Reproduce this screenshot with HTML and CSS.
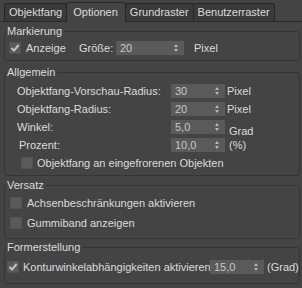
FILE: index.html
```html
<!DOCTYPE html>
<html lang="de">
	<head>
		<meta charset="UTF-8">
		<title>Optionen</title>
		<link rel="stylesheet" href="styles.css">
	</head>
	<body>
		<div class="tabs">
			<div class="tab">Objektfang</div>
			<div class="tab active">Optionen</div>
			<div class="tab">Grundraster</div>
			<div class="tab">Benutzerraster</div>
		</div>

		<fieldset class="group g1">
			<legend>Markierung</legend>
			<div class="row r-mark">
				<span class="check on"><svg viewBox="0 0 12 12"><polyline points="2.5,6 5,8.6 9.6,3"/></svg></span>
				<span class="txt anz">Anzeige</span>
				<span class="txt size">Größe:</span>
				<span class="spin w68">20<i class="arr"></i></span>
				<span class="unit u10">Pixel</span>
			</div>
		</fieldset>

		<fieldset class="group g2">
			<legend>Allgemein</legend>
			<div class="row r-field">
				<span class="txt name">Objektfang-Vorschau-Radius:</span>
				<span class="spin">30<i class="arr"></i></span>
				<span class="unit">Pixel</span>
			</div>
			<div class="row r-field">
				<span class="txt name">Objektfang-Radius:</span>
				<span class="spin">20<i class="arr"></i></span>
				<span class="unit">Pixel</span>
			</div>
			<div class="row r-field">
				<span class="txt name">Winkel:</span>
				<span class="spin">5,0<i class="arr"></i></span>
				<span class="unit low">Grad</span>
			</div>
			<div class="row r-field r-pct">
				<span class="txt name">Prozent:</span>
				<span class="spin">10,0<i class="arr"></i></span>
				<span class="unit u4">(%)</span>
			</div>
			<div class="row r-frozen">
				<span class="check"></span>
				<span class="txt">Objektfang an eingefrorenen Objekten</span>
			</div>
		</fieldset>

		<fieldset class="group g3">
			<legend>Versatz</legend>
			<div class="row r-off">
				<span class="check"></span>
				<span class="txt">Achsenbeschränkungen aktivieren</span>
			</div>
			<div class="row r-off">
				<span class="check"></span>
				<span class="txt">Gummiband anzeigen</span>
			</div>
		</fieldset>

		<fieldset class="group g4">
			<legend>Formerstellung</legend>
			<div class="row">
				<span class="check on"><svg viewBox="0 0 12 12"><polyline points="2.5,6 5,8.6 9.6,3"/></svg></span>
				<span class="txt contour">Konturwinkelabhängigkeiten aktivieren</span>
				<span class="spin">15,0<i class="arr"></i></span>
				<span class="unit u3">(Grad)</span>
			</div>
		</fieldset>
	</body>
</html>
```

FILE: styles.css
```css
* {
	margin: 0;
	padding: 0;
	box-sizing: border-box;
}

body {
	width: 302px;
	height: 288px;
	overflow: hidden;
	background-color: #444;
	color: #dcdcdc;
	font-family: "Liberation Sans", Arial, sans-serif;
	font-size: 11px;
}

/* Reiter */
.tabs {
	display: flex;
	align-items: flex-end;
	height: 22px;
	padding-left: 4px;
	border-bottom: 1px solid #2a2a2a;
}

.tab {
	height: 18px;
	margin-right: -1px;
	padding: 0 4px;
	border: 1px solid #262626;
	border-bottom: none;
	border-radius: 3px 3px 0 0;
	background-color: #3a3a3a;
	line-height: 16px;
	white-space: nowrap;
}

.tab.active {
	position: relative;
	height: 20px;
	margin-bottom: -1px;
	padding: 0 7px 0 6px;
	background-color: #444;
	line-height: 18px;
}

/* Gruppen */
.group {
	min-width: 0;
	margin: 0 2px 0 4px;
	padding: 0 4px 0 2px;
	border: 1px solid #353535;
	border-radius: 3px;
}

.group legend {
	margin-left: -1px;
	padding: 0 2px 0 1px;
	line-height: 14px;
}

.g1 {
	margin-top: 2px;
	padding-top: 3px;
	padding-bottom: 5px;
}

.g2 {
	margin-top: 4px;
	padding-top: 5px;
	padding-bottom: 5px;
}

.g3 {
	margin-top: 2px;
	padding-top: 4px;
	padding-bottom: 8px;
}

.g4 {
	margin-top: 1px;
	padding-top: 6px;
	padding-right: 0;
	padding-bottom: 9px;
}

.row {
	display: flex;
	align-items: center;
	height: 14px;
	white-space: nowrap;
}

.r-mark {
	padding-left: 2px;
}

.r-field {
	padding-left: 10px;
	margin-bottom: 4px;
}

.r-field .name {
	width: 154px;
}

.r-pct {
	padding-left: 12px;
}

.r-pct .name {
	width: 152px;
}

.r-frozen {
	padding-left: 14px;
}

.r-off {
	padding-left: 3px;
}

.r-off + .r-off {
	margin-top: 6px;
}

.txt {
	margin-left: 5px;
}

.r-field .txt {
	margin-left: 0;
}

.r-frozen .txt,
.g4 .txt {
	margin-left: 4px;
}

.anz {
	width: 48px;
}

.size {
	width: 37px;
}

/* der Text wird vom Zahlenfeld abgeschnitten */
.contour {
	flex: none;
	width: 187px;
	overflow: hidden;
}

/* Kontrollkästchen */
.check {
	display: block;
	flex: none;
	width: 12px;
	height: 12px;
	background-color: #5a5a5a;
	border: 1px solid #525252;
}

.check svg {
	display: block;
	width: 12px;
	height: 12px;
	margin: -1px;
	fill: none;
	stroke: #c4c4c4;
	stroke-width: 2;
}

/* Zahlenfelder */
.spin {
	position: relative;
	flex: none;
	width: 54px;
	height: 14px;
	padding-left: 4px;
	background-color: #5a5a5a;
	color: #c8c8c8;
	line-height: 14px;
}

.spin.w68 {
	width: 68px;
}

.arr {
	position: absolute;
	right: 5px;
	top: 3px;
	width: 5px;
	height: 8px;
}

.arr::before,
.arr::after {
	content: "";
	position: absolute;
	left: 0;
	border-left: 2.5px solid transparent;
	border-right: 2.5px solid transparent;
}

.arr::before {
	top: 0;
	border-bottom: 3px solid #b8b8b8;
}

.arr::after {
	bottom: 0;
	border-top: 3px solid #b8b8b8;
}

.unit {
	margin-left: 2px;
}

.unit.u10 {
	margin-left: 10px;
}

.unit.u4 {
	margin-left: 4px;
}

.unit.u3 {
	margin-left: 3px;
}

.unit.low {
	margin-left: 4px;
	margin-top: 7px;
}
```
